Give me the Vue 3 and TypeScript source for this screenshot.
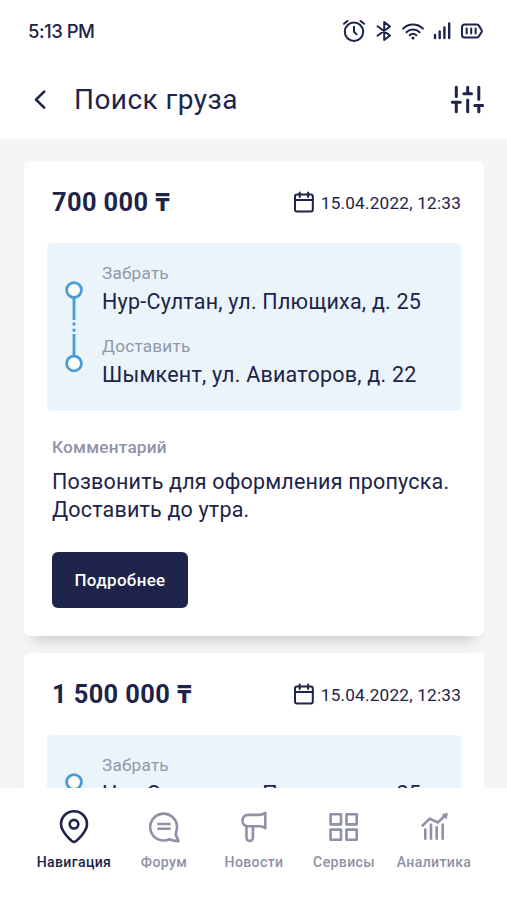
<script setup lang="ts">
import { ref } from 'vue'

interface Cargo {
  id: number
  price: string
  date: string
  from: string
  to: string
  comment: string[]
}

interface Tab {
  key: string
  label: string
}

const comment = ['Позвонить для оформления пропуска.', 'Доставить до утра.']

const cargos: Cargo[] = [
  {
    id: 1,
    price: '700 000 ₸',
    date: '15.04.2022, 12:33',
    from: 'Нур-Султан, ул. Плющиха, д. 25',
    to: 'Шымкент, ул. Авиаторов, д. 22',
    comment,
  },
  {
    id: 2,
    price: '1 500 000 ₸',
    date: '15.04.2022, 12:33',
    from: 'Нур-Султан, ул. Плющиха, д. 25',
    to: 'Шымкент, ул. Авиаторов, д. 22',
    comment,
  },
]

const tabs: Tab[] = [
  { key: 'map', label: 'Навигация' },
  { key: 'forum', label: 'Форум' },
  { key: 'news', label: 'Новости' },
  { key: 'services', label: 'Сервисы' },
  { key: 'stats', label: 'Аналитика' },
]

const active = ref('map')
</script>

<template>
  <div class="screen">
    <header class="top">
      <div class="status">
        <span class="time">5:13 PM</span>
        <div class="status-icons">
          <svg class="alarm" viewBox="0 0 22 22" width="22" height="22">
            <circle cx="11" cy="11.800" r="9.200" />
            <path d="M11 6.800v5l2.600 2.600M1 3.800 4.400 1M21 3.800 17.600 1" />
          </svg>
          <svg class="bluetooth" viewBox="0 0 16 20" width="16" height="20">
            <path d="M1.500 5.300 14 14.500 8.200 19V1L14 5.500 1.500 14.700" />
          </svg>
          <svg class="wifi" viewBox="0 0 24 18" width="24" height="18">
            <path d="M2 6.600C7.600 1 16.400 1 22 6.600M5.400 10.200c3.700-3.600 9.500-3.600 13.200 0M8.700 13.300c1.900-1.700 4.700-1.700 6.600 0" />
            <circle class="dot" cx="12" cy="16" r="1.500" />
          </svg>
          <svg class="signal" viewBox="0 0 18 18" width="18" height="18">
            <path d="M2 13v3M6.700 9.500V16M11.400 5.500V16M16.200 1.500V16" />
          </svg>
          <svg class="battery" viewBox="0 0 24 16" width="24" height="16">
            <path d="M4.500 1.500h12.300c1 0 1.800.5 2.200 1.400l2.600 4.100c.4.600.4 1.400 0 2L19 13.100c-.4.900-1.200 1.400-2.200 1.400H4.500a2.500 2.500 0 0 1-2.500-2.500V4a2.500 2.500 0 0 1 2.500-2.500Z" />
            <path d="M6.700 5.600v4.800M11.200 5.600v4.800M15.600 5.600v4.800" />
          </svg>
        </div>
      </div>
      <div class="bar">
        <button class="icon-button" aria-label="Назад">
          <svg viewBox="0 0 14 22" width="14" height="22">
            <path d="M11.200 2.600 3 10.600l8.200 8" />
          </svg>
        </button>
        <h1>Поиск груза</h1>
        <button class="icon-button filter" aria-label="Фильтр">
          <svg viewBox="0 0 34 30" width="34" height="30">
            <path d="M6.300 2.300v9.200M2.400 17.200h7.900M6.300 17.200v9.600M17.700 2.300v6.500M13.900 8.800h7.600M17.700 15v11.800M28.800 2.300v11.900M24.800 20.500h7.800M28.800 20.500v6.300" />
          </svg>
        </button>
      </div>
    </header>

    <main class="feed">
      <article v-for="cargo in cargos" :key="cargo.id" class="card">
        <div class="card-head">
          <strong class="price">{{ cargo.price }}</strong>
          <span class="date">
            <svg viewBox="0 0 22 22" width="22" height="22">
              <rect x="2" y="3.500" width="17.800" height="17" rx="2" />
              <path d="M2 9h17.800M6.700 1.400V6M15.100 1.400V6" />
            </svg>
            <span class="date-text">{{ cargo.date }}</span>
          </span>
        </div>

        <div class="route">
          <svg class="track" viewBox="0 0 18 92" width="18" height="92">
            <path d="M9 17v22M9 53v22" />
            <path d="M9 41.400v3M9 47.700v3" />
            <circle cx="9" cy="9" r="7.400" />
            <circle cx="9" cy="82.400" r="7.400" />
          </svg>
          <dl class="stops">
            <dt>Забрать</dt>
            <dd>{{ cargo.from }}</dd>
            <dt>Доставить</dt>
            <dd>{{ cargo.to }}</dd>
          </dl>
        </div>

        <div class="comment-label">Комментарий</div>
        <p class="comment">
          <span v-for="line in cargo.comment" :key="line">{{ line }}</span>
        </p>
        <button class="more">Подробнее</button>
      </article>
    </main>

    <nav class="tabs">
      <button
        v-for="tab in tabs"
        :key="tab.key"
        class="tab"
        :class="{ active: tab.key === active }"
        @click="active = tab.key"
      >
        <svg v-if="tab.key === 'map'" viewBox="0 0 36 36" width="36" height="36">
          <path d="M18 33c-1.500 0-3-1.400-4.800-3.300C8.700 25 5 20.600 5 15.200a13 13 0 0 1 26 0c0 5.400-3.700 9.800-8.200 14.500C21 31.600 19.500 33 18 33Z" />
          <circle cx="18" cy="15.200" r="4.300" />
        </svg>
        <svg v-else-if="tab.key === 'forum'" viewBox="0 0 36 36" width="36" height="36">
          <path d="M23.300 30.200A13.400 13.400 0 1 1 31 17.800c0 3-1 5.700-1.200 7.400-.1 1.800 2.200 4.500 2.700 6.900-3.800 0-6.800-.5-9.200-1.900Z" />
          <path d="M12.400 15h11.200M12.400 19.800h11.200" />
        </svg>
        <svg v-else-if="tab.key === 'news'" viewBox="0 0 36 36" width="36" height="36">
          <path d="M12.300 5.900h11.500c2 0 3.700-.6 5.500-2.100v15.400c-1.800-1.300-3.500-1.900-5.500-1.900H12.300C4.400 17.300 4.400 5.900 12.300 5.900Z" />
          <path d="M10.500 17.500v11.300a3.200 3.200 0 0 0 6.400 0V17.500" />
        </svg>
        <svg v-else-if="tab.key === 'services'" viewBox="0 0 36 36" width="36" height="36">
          <path d="M4.600 5.300H15v10.100H4.600ZM20.500 5.300h10.200v10.100H20.500ZM4.600 20.600H15v10.100H4.600ZM20.500 20.600h10.200v10.100H20.500Z" />
        </svg>
        <svg v-else class="chart" viewBox="0 0 36 36" width="36" height="36">
          <path d="m5.900 17.300 7.700-7.700 8.200 3.900 7.200-6.900" />
          <path d="M9.300 19.600v11.100M15 14.500v16.200M20.700 17.300v13.400M26.700 14.500v16.200" />
          <path class="tip" d="m31.300 4.400-1 5.200-4-3.900Z" />
        </svg>
        <span>{{ tab.label }}</span>
      </button>
    </nav>
  </div>
</template>

<style>
body {
  margin: 0;
}
</style>

<style scoped>
.screen {
  display: flex;
  flex-direction: column;
  width: 100%;
  height: 900px;
  overflow: hidden;
  background: #f5f5f5;
  color: #1d2349;
  font-family: Roboto, 'Noto Sans', sans-serif;
}

button {
  margin: 0;
  padding: 0;
  border: 0;
  background: none;
  color: inherit;
  font: inherit;
  cursor: pointer;
}

svg {
  display: block;
  flex: none;
  fill: none;
  stroke: currentColor;
  stroke-width: 2;
  stroke-linecap: round;
  stroke-linejoin: round;
}

.top {
  flex: none;
  height: 139px;
  background: #fff;
}

.status {
  display: flex;
  align-items: center;
  justify-content: space-between;
  height: 61px;
  padding: 0 23px 0 28px;
}

.time {
  font-family: Inter, Roboto, sans-serif;
  font-size: 18.500px;
  font-weight: 500;
  letter-spacing: -0.500px;
}

.status-icons {
  display: flex;
  align-items: center;
}

.bluetooth {
  margin-left: 11px;
}

.wifi {
  margin-left: 9px;
}

.wifi .dot {
  fill: currentColor;
  stroke: none;
}

.signal {
  margin-left: 8px;
  stroke-width: 2.400;
}

.battery {
  margin-left: 9px;
}

.bar {
  display: flex;
  align-items: center;
  height: 77px;
  padding: 0 23px 0 33px;
}

.icon-button svg {
  stroke-width: 2.600;
}

.filter {
  margin-left: auto;
}

.filter svg {
  stroke-width: 3;
}

h1 {
  margin: 0 0 0 27px;
  font-size: 28px;
  font-weight: 400;
  letter-spacing: 0.450px;
}

.feed {
  display: flex;
  flex: 1;
  flex-direction: column;
  gap: 17px;
  min-height: 0;
  padding: 22px 23px 0 24px;
  overflow: hidden;
}

.card {
  display: flex;
  flex: none;
  flex-direction: column;
  box-sizing: border-box;
  height: 475px;
  padding: 0 23px;
  border-radius: 6px;
  background: #fff;
  box-shadow: 0 14px 12px -9px rgba(0, 0, 0, 0.16);
}

.card-head {
  display: flex;
  align-items: center;
  justify-content: space-between;
  height: 82px;
  padding-left: 5px;
}

.price {
  padding-bottom: 3px;
  font-size: 25.400px;
  font-weight: 700;
  letter-spacing: 0.400px;
}

.date {
  display: flex;
  align-items: center;
  gap: 6px;
  font-size: 17.200px;
  letter-spacing: 0.200px;
}

.date-text {
  padding-top: 2px;
}

.route {
  display: flex;
  box-sizing: border-box;
  height: 168px;
  padding: 20px 0 0 18px;
  border-radius: 5px;
  background: #ebf4fb;
}

.track {
  margin-top: 18px;
  color: #4b9bd6;
  stroke-linecap: butt;
  stroke-width: 2.800;
}

.track circle {
  fill: #fff;
}

.stops {
  margin: 0 0 0 19px;
}

dt {
  height: 22px;
  color: #9298a8;
  font-size: 17.200px;
  line-height: 21px;
  letter-spacing: 0.220px;
}

dd {
  height: 33px;
  margin: 0 0 18px;
  font-size: 21.500px;
  line-height: 33px;
  letter-spacing: 0.230px;
}

.comment-label {
  margin: 26px 0 0 5px;
  color: #9092a7;
  font-size: 17.200px;
  font-weight: 500;
  line-height: 21px;
  letter-spacing: 0.220px;
}

.comment {
  display: flex;
  flex-direction: column;
  margin: 10px 0 0 5px;
  font-size: 21.500px;
  line-height: 28px;
  letter-spacing: 0.180px;
  white-space: nowrap;
}

.more {
  align-self: flex-start;
  width: 136px;
  height: 56px;
  margin: 28px 0 0 5px;
  padding-bottom: 1px;
  border-radius: 6px;
  background: #1d2349;
  color: #fff;
  font-size: 16.900px;
  font-weight: 500;
  letter-spacing: 0.400px;
}

.tabs {
  display: grid;
  flex: none;
  grid-template-columns: repeat(5, 90px);
  box-sizing: border-box;
  height: 112px;
  padding: 21px 0 0 29px;
  background: #fff;
}

.tab {
  display: flex;
  flex-direction: column;
  align-items: center;
  align-self: start;
  gap: 7px;
  color: #8f91a6;
  font-size: 14.080px;
  font-weight: 500;
  line-height: 20px;
  letter-spacing: 0.350px;
  white-space: nowrap;
}

.tab svg {
  stroke-width: 2.600;
}

.tab.active {
  color: #1d2349;
}

.chart {
  stroke-linecap: butt;
}

.chart .tip {
  fill: currentColor;
  stroke-width: 1;
}
</style>
